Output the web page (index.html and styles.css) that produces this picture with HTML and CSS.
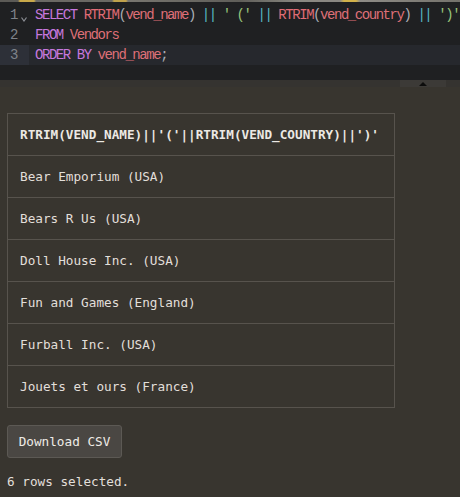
FILE: index.html
```html
<!DOCTYPE html>
<html>
<head>
<meta charset="utf-8">
<link rel="stylesheet" href="styles.css">
</head>
<body>
<div class="strip"></div>
<div class="editor">
  <div class="line">
    <div class="gutter"><span class="num">1</span><svg class="fold" width="6" height="5" viewBox="0 0 6 5"><path d="M0.5 0.5 L3 4 L5.5 0.5" fill="none" stroke="#8a8d93" stroke-width="1.2"/></svg></div>
    <div class="code"><span class="kw">SELECT</span> <span class="fn">RTRIM</span><span class="p">(</span><span class="id">vend_name</span><span class="p">)</span> <span class="op">||</span> <span class="str">' ('</span> <span class="op">||</span> <span class="fn">RTRIM</span><span class="p">(</span><span class="id">vend_country</span><span class="p">)</span> <span class="op">||</span> <span class="str">')'</span></div>
  </div>
  <div class="line">
    <div class="gutter"><span class="num">2</span></div>
    <div class="code"><span class="kw">FROM</span> <span class="id">Vendors</span></div>
  </div>
  <div class="line active">
    <div class="gutter"><span class="num">3</span></div>
    <div class="code"><span class="kw">ORDER BY</span> <span class="id">vend_name</span><span class="p">;</span></div>
  </div>
</div>
<div class="splitter"><div class="handle"><span class="tri"></span></div></div>
<div class="results">
  <table class="grid">
    <thead><tr><th>RTRIM(VEND_NAME)||'('||RTRIM(VEND_COUNTRY)||')'</th></tr></thead>
    <tbody>
      <tr><td>Bear Emporium (USA)</td></tr>
      <tr><td>Bears R Us (USA)</td></tr>
      <tr><td>Doll House Inc. (USA)</td></tr>
      <tr><td>Fun and Games (England)</td></tr>
      <tr><td>Furball Inc. (USA)</td></tr>
      <tr><td>Jouets et ours (France)</td></tr>
    </tbody>
  </table>
  <button class="btn">Download CSV</button>
  <div class="status">6 rows selected.</div>
</div>
</body>
</html>
```
FILE: styles.css
```css
html, body {
  margin: 0;
  padding: 0;
  background: #38352f;
}
body {
  width: 460px;
  height: 497px;
  overflow: hidden;
}
.strip {
  height: 2px;
  background: linear-gradient(90deg, #5b5a56 0, #5b5a56 18px, #c9a94a 20px, #c9a94a 34px, #6a6964 36px, #6a6964 112px, #c0a24c 114px, #c0a24c 126px, #77756f 128px, #5f5e59 240px, #8a8882 300px, #8a8882 340px, #d2b24a 344px, #d2b24a 356px, #8e8c86 360px, #74726c 460px);
}
.editor {
  background: #1f2022;
  height: 78px;
  padding-top: 3px;
  box-sizing: border-box;
  font-family: "Liberation Mono", monospace;
  font-size: 14px;
  letter-spacing: -1.45px;
}
.line {
  display: flex;
  height: 20px;
  line-height: 20px;
}
.line.active {
  background: #26282d;
}
.gutter {
  width: 29px;
  flex: none;
  display: flex;
  align-items: center;
  position: relative;
  color: #7f838a;
}
.line.active .gutter {
  background: #2d3038;
}
.num {
  width: 17px;
  text-align: right;
}
.fold {
  position: absolute;
  left: 21px;
  top: 12px;
}
.code {
  padding-left: 6px;
  white-space: pre;
  color: #abb2bf;
}
.kw { color: #c678dd; }
.fn { color: #e06c75; }
.id { color: #de6f77; }
.p { color: #a9adb5; }
.op { color: #56b6c2; }
.str { color: #98c379; }
.splitter {
  height: 7px;
  background: #353330;
  display: flex;
  justify-content: flex-end;
}
.handle {
  width: 46px;
  margin-right: 14px;
  background: #3c3a37;
  display: flex;
  justify-content: center;
  align-items: center;
}
.tri {
  width: 0;
  height: 0;
  border-left: 4px solid transparent;
  border-right: 4px solid transparent;
  border-bottom: 4px solid #0c0c0c;
}
.results {
  padding: 26px 7px 0;
  font-family: "DejaVu Sans Mono", monospace;
  font-size: 12.7px;
  color: #e2dfda;
}
.grid {
  border-collapse: collapse;
  width: 388px;
}
.grid th, .grid td {
  border: 1px solid #57534d;
  height: 41px;
  padding: 0 0 0 12px;
  text-align: left;
}
.grid th {
  font-weight: bold;
  color: #ece9e4;
}
.btn {
  display: block;
  margin-top: 17px;
  width: 115px;
  height: 33px;
  background: #4a4743;
  border: 1px solid #5c5954;
  border-radius: 3px;
  color: #eeebe6;
  font-family: "DejaVu Sans Mono", monospace;
  font-size: 12.7px;
  padding: 0;
}
.status {
  margin-top: 16px;
  line-height: 16px;
}
```
